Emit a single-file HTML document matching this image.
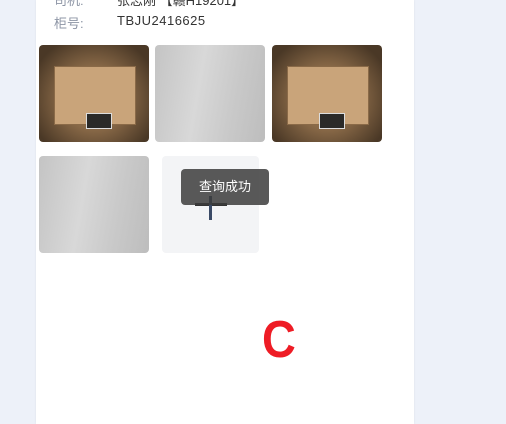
<!DOCTYPE html>
<html><head><meta charset="utf-8"><style>
body{margin:0;width:506px;height:424px;background:#edf1f9;position:relative;overflow:hidden;font-family:"Liberation Sans","Noto Sans CJK SC",sans-serif}
.card{position:absolute;left:36px;top:0;width:378px;height:424px;background:#fff;box-shadow:0 0 2px rgba(0,0,0,.08)}
.t{position:absolute;font-size:13px;color:#333}
.l{color:#8d95a5}
.img{position:absolute;width:110px;height:97px;border-radius:4px;overflow:hidden}
.box{background:radial-gradient(ellipse at 50% 55%,#b08a60 0,#8a6a48 40%,#4a3826 85%)}
.box:before{content:"";position:absolute;left:14%;top:22%;width:72%;height:58%;background:#c9a47a;border:1px solid #8a6a48}
.box:after{content:"";position:absolute;left:43%;top:70%;width:22%;height:15%;background:#2b2a28;border:1px solid #ddd}
.gray{background:linear-gradient(100deg,#c4c4c4,#d8d8d8 40%,#c9c9c9 70%,#bdbdbd)}
</style></head><body>
<div class="card">
<div class="t l" style="left:18px;top:-10px">司机:</div>
<div class="t" style="left:81px;top:-10px">张志刚 【赣H19201】</div>
<div class="t l" style="left:18px;top:13px">柜号:</div>
<div class="t" style="left:81px;top:13px;letter-spacing:.5px">TBJU2416625</div>
</div>
<div class="img box" style="left:39px;top:45px"></div>
<div class="img gray" style="left:155px;top:45px"></div>
<div class="img box" style="left:272px;top:45px"></div>
<div class="img gray" style="left:39px;top:156px"></div>
<div style="position:absolute;left:162px;top:156px;width:97px;height:97px;background:#f3f4f6;border-radius:4px"></div>
<div style="position:absolute;left:195px;top:203px;width:32px;height:3px;background:#333"></div>
<div style="position:absolute;left:209px;top:196px;width:3px;height:24px;background:#3a4a66"></div>
<div style="position:absolute;left:181px;top:169px;width:88px;height:36px;background:rgba(60,60,60,.85);border-radius:4px;color:#fff;font-size:13px;line-height:36px;text-align:center">查询成功</div>
<div style="position:absolute;left:262px;top:310px;font-size:52px;font-weight:bold;color:#ee1c25;line-height:60px;transform:scaleX(.9);transform-origin:left">C</div>
</body></html>
